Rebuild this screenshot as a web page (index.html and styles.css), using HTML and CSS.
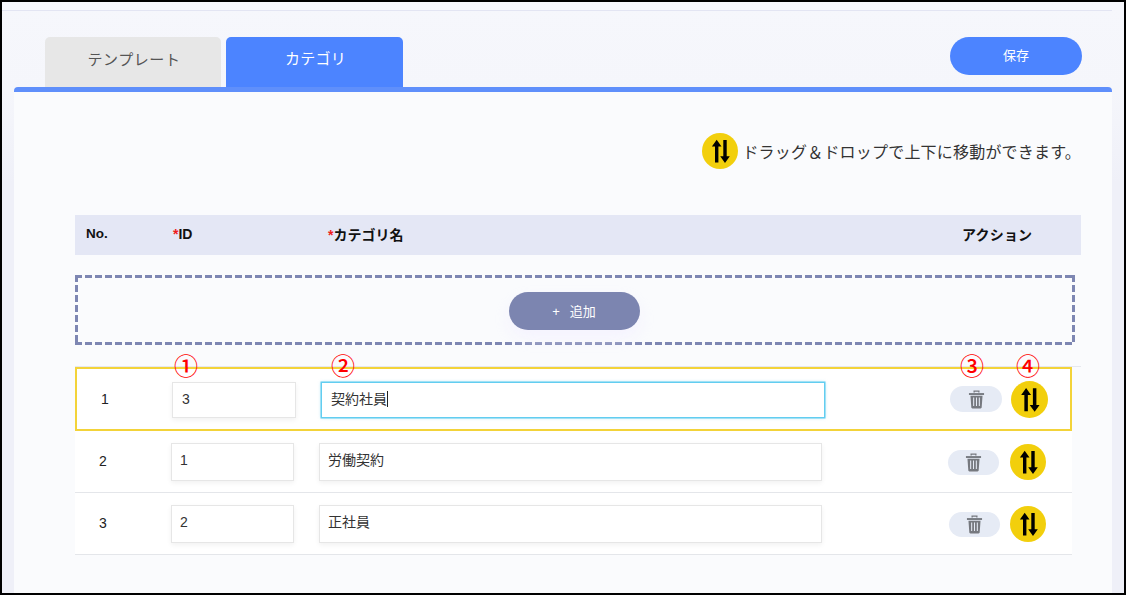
FILE: index.html
```html
<!DOCTYPE html>
<html lang="ja">
<head>
<meta charset="utf-8">
<title>カテゴリ</title>
<link rel="stylesheet" href="styles.css">
</head>
<body>
<svg class="defs" width="0" height="0" aria-hidden="true">
  <symbol id="swap" viewBox="0 0 36 36">
    <circle cx="18" cy="18" r="18" fill="#f2cf0c"/>
    <path d="M14.7 6.8l4.8 6.7h-3.1v16h-3.4v-16H9.9z" fill="#000"/>
    <path d="M23 30l-4.8-6.7h3.1V7h3.4v16.3h3.1z" fill="#000"/>
  </symbol>
  <symbol id="trash" viewBox="0 0 18 20">
    <path d="M6.5 2.6V1.2h5v1.4" fill="none" stroke="#76797f" stroke-width="1.4"/>
    <path d="M1 3.2h16v2H1z" fill="#76797f"/>
    <path d="M2.6 6h12.8l-.9 12.2c0 .7-.5 1.2-1.2 1.2H4.7c-.7 0-1.2-.5-1.2-1.2z" fill="#76797f"/>
    <path d="M6 8v9M9 8v9M12 8v9" stroke="#e6ebf5" stroke-width="1.1"/>
  </symbol>
</svg>
<div class="frame">
  <div class="topline"></div>
  <div class="tabbar">
    <div class="tab">テンプレート</div>
    <div class="tab tab-active">カテゴリ</div>
    <button class="save">保存</button>
  </div>
  <main class="panel">
    <div class="hint">
      <svg class="swap-icon"><use href="#swap"/></svg>
      <span class="hint-text">ドラッグ＆ドロップで上下に移動ができます。</span>
    </div>
    <div class="thead">
      <div class="th th-no">No.</div>
      <div class="th th-id"><span class="req">*</span>ID</div>
      <div class="th th-name"><span class="req">*</span>カテゴリ名</div>
      <div class="th th-action">アクション</div>
    </div>
    <div class="dropzone">
      <button class="add"><span class="plus">+</span>追加</button>
    </div>
    <div class="list-top"></div>
    <div class="row row-drag">
      <span class="mark mark-1">①</span>
      <span class="mark mark-2">②</span>
      <span class="mark mark-3">③</span>
      <span class="mark mark-4">④</span>
      <div class="no">1</div>
      <div class="field field-id">3</div>
      <div class="field field-name field-focus"><span class="caret">契約社員</span></div>
      <div class="actions">
        <button class="del"><svg class="trash-icon"><use href="#trash"/></svg></button>
        <svg class="swap-icon"><use href="#swap"/></svg>
      </div>
    </div>
    <div class="row">
      <div class="no">2</div>
      <div class="field field-id">1</div>
      <div class="field field-name">労働契約</div>
      <div class="actions">
        <button class="del"><svg class="trash-icon"><use href="#trash"/></svg></button>
        <svg class="swap-icon"><use href="#swap"/></svg>
      </div>
    </div>
    <div class="row">
      <div class="no">3</div>
      <div class="field field-id">2</div>
      <div class="field field-name">正社員</div>
      <div class="actions actions-last">
        <button class="del"><svg class="trash-icon"><use href="#trash"/></svg></button>
        <svg class="swap-icon"><use href="#swap"/></svg>
      </div>
    </div>
  </main>
</div>
</body>
</html>
```
FILE: styles.css
```css
* { box-sizing: border-box; }
html, body { margin: 0; padding: 0; }
body {
  font-family: "Liberation Sans", "Noto Sans CJK JP", sans-serif;
  font-size: 14px;
  color: #222;
}
.defs { position: absolute; }
.frame {
  width: 1126px;
  height: 595px;
  border: 2px solid #000;
  overflow: hidden;
  background: linear-gradient(#f6f7fc 0, #f5f6fb 90px, #eff0f8 180px);
}
.topline {
  width: 1110px;
  height: 9px;
  border-bottom: 1px solid #e3e5f3;
}
.tabbar {
  display: flex;
  align-items: flex-start;
  width: 1110px;
  height: 76px;
  padding: 26px 30px 0 43px;
}
.tab {
  width: 176px;
  height: 50px;
  margin-right: 5px;
  padding-left: 2px;
  border-radius: 5px 5px 0 0;
  background: #e7e7e7;
  color: #555;
  font-size: 15px;
  line-height: 46px;
  text-align: center;
  letter-spacing: .6px;
}
.tab-active {
  width: 177px;
  background: #4c84ff;
  color: #fff;
  line-height: 44px;
  letter-spacing: .2px;
}
.save {
  width: 132px;
  height: 38px;
  margin-left: auto;
  border: 0;
  border-radius: 19px;
  background: #4c84ff;
  color: #fff;
  font: 13px "Liberation Sans", "Noto Sans CJK JP", sans-serif;
  padding: 0 0 4px 0;
}
.panel {
  width: 1098px;
  height: 510px;
  margin-left: 12px;
  padding: 41px 31px 0 61px;
  border-top: 5px solid #5f8ffb;
  border-radius: 4px 4px 0 0;
  background: #fafbfd;
}
.hint {
  display: flex;
  align-items: center;
  justify-content: flex-end;
  height: 36px;
  padding-right: 0;
}
.hint-text {
  margin-left: 4px;
  margin-bottom: 1px;
  font-size: 16px;
  letter-spacing: .2px;
  color: #333;
  white-space: nowrap;
}
.swap-icon {
  display: block;
  width: 36px;
  height: 36px;
  flex: none;
}
.thead {
  display: flex;
  align-items: center;
  height: 40px;
  margin-top: 46px;
  padding: 0 0 3px 11px;
  background: #e4e7f5;
  color: #111;
  font-weight: 700;
  font-size: 14px;
}
.th-no { width: 87px; font-size: 13.5px; }
.th-id { width: 155px; }
.th-name { flex: 1; }
.th-action { width: 119px; letter-spacing: .2px; }
.req { color: #f01c1c; }
.dropzone {
  display: flex;
  justify-content: center;
  align-items: center;
  width: 1000px;
  height: 70px;
  margin-top: 20px;
  padding: 2px 2px 0 0;
  background:
    repeating-linear-gradient(90deg, #7d86b2 0 7px, transparent 7px 10px) top / 100% 3px no-repeat,
    repeating-linear-gradient(90deg, #7d86b2 0 7px, transparent 7px 10px) bottom / 100% 3px no-repeat,
    repeating-linear-gradient(180deg, #7d86b2 0 7px, transparent 7px 10px) left / 3px 100% no-repeat,
    repeating-linear-gradient(180deg, #7d86b2 0 7px, transparent 7px 10px) right / 3px 100% no-repeat;
}
.add {
  width: 131px;
  height: 38px;
  padding: 0 0 2px;
  border: 0;
  border-radius: 19px;
  background: #7c85b0;
  color: #fff;
  font: 13px "Liberation Sans", "Noto Sans CJK JP", sans-serif;
  box-shadow: 0 8px 16px rgba(243, 240, 255, .75);
}
.plus { margin-right: 10px; }
.list-top {
  width: 1006px;
  height: 1px;
  margin-top: 21px;
  background: #e6e8ee;
}
.row {
  position: relative;
  display: flex;
  align-items: center;
  width: 997px;
  height: 62px;
  padding-top: 1px;
  border-bottom: 1px solid #e4e6ea;
  background: #fff;
}
.no {
  width: 96px;
  padding: 0 0 2px 24px;
  font-size: 14px;
  color: #222;
}
.field {
  height: 38px;
  border: 1px solid #e6e6e6;
  box-shadow: 0 2px 5px rgba(0, 0, 0, .06);
  background: #fff;
  padding-left: 8px;
  line-height: 33px;
  font-size: 14px;
  color: #333;
}
.field-id { width: 123px; margin-right: 25px; }
.field-name { width: 503px; }
.actions {
  display: flex;
  align-items: center;
  margin-left: auto;
  padding-right: 26px;
}
.del {
  display: flex;
  align-items: center;
  justify-content: center;
  width: 51px;
  height: 25px;
  margin-right: 11px;
  padding: 0;
  border: 0;
  border-radius: 13px;
  background: #e6ebf5;
}
.trash-icon { display: block; width: 17px; height: 19px; }
.actions-last .del { margin-right: 10px; }
.row-drag {
  height: 64px;
  padding-top: 0;
  border: 2px solid #f3d339;
}
.row-drag .no { width: 95px; padding: 0 0 0 24px; }
.row-drag .field {
  height: 36px;
  margin-top: 2px;
  padding-left: 9px;
  line-height: 33px;
}
.row-drag .field-id { width: 124px; margin-right: 25px; }
.row-drag .field-name { width: 504px; }
.row-drag .field-focus {
  border-color: #62cdf0;
  box-shadow: 0 0 0 .5px #62cdf0, 0 0 3px rgba(98, 205, 240, .5);
}
.row-drag .actions { padding-right: 22px; }
.row-drag .del { width: 52px; height: 26px; margin-right: 9px; }
.row-drag .swap-icon { width: 37px; height: 37px; }
.caret { border-right: 1px solid #222; }
.mark {
  position: absolute;
  top: -22px;
  color: #f00;
  font-size: 24px;
  font-weight: 500;
  line-height: 36px;
  font-family: "Noto Sans CJK JP", sans-serif;
}
.mark-1 { left: 97px; }
.mark-2 { left: 254px; }
.mark-3 { left: 883px; }
.mark-4 { left: 939px; }
```
